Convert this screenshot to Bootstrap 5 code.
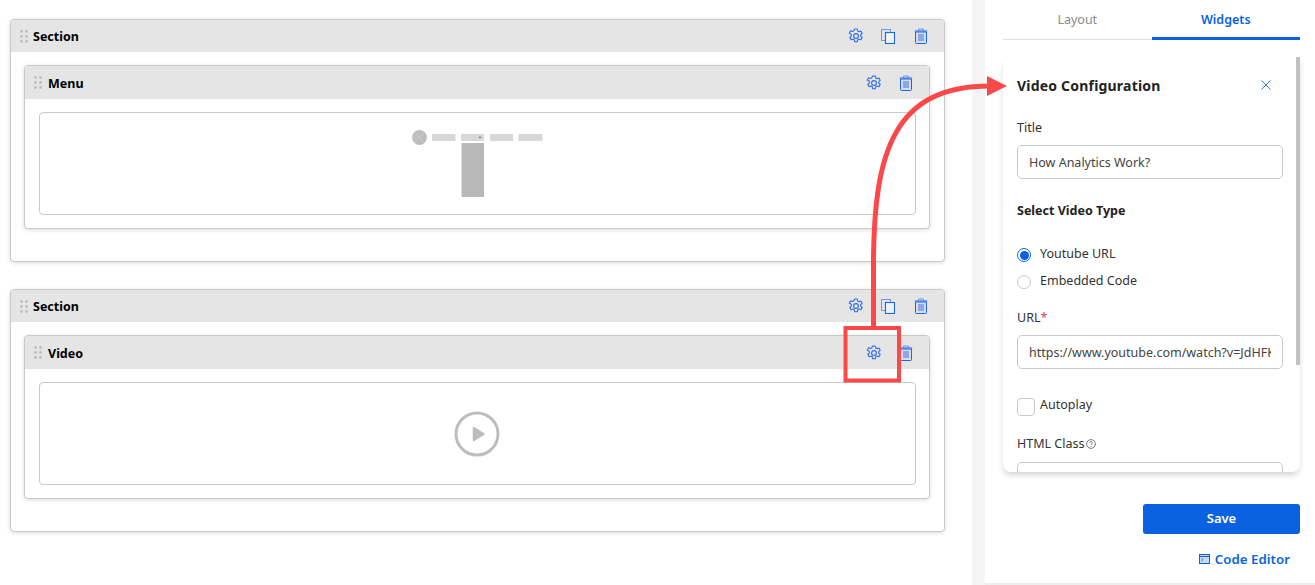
<!DOCTYPE html>
<html lang="en">
<head>
<meta charset="utf-8">
<title>Video Configuration</title>
<link href="https://cdn.jsdelivr.net/npm/bootstrap@5.3.0/dist/css/bootstrap.min.css" rel="stylesheet">
<style>
html,body{height:585px;overflow:hidden;background:#fff;}
body{font-family:"Noto Sans","Open Sans",sans-serif;font-size:13px;color:#333;position:relative;}
.page-wrap{height:585px;}
.canvas-area{width:972px;padding:19px 27px 0 10px;flex:none;}
.gutter-band{width:13px;background:#f5f5f5;flex:none;}
.side-area{flex:1;padding:0 15px 0 18px;min-width:0;border-bottom:2px solid #eee;}
.block-box{border:1px solid #c9c9c9;border-radius:4px;box-shadow:0 1px 4px rgba(0,0,0,.14);background:#fff;}
.section-box{height:243px;margin-bottom:27px;}
.block-head{background:#e5e5e5;border-radius:3px 3px 0 0;font-weight:700;color:#000;font-size:12.5px;}
.head-label{padding-top:3px;}
.section-box>.block-head{height:32px;padding:0 16px 0 9px;}
.widget-box{margin:13px 14px 0 13px;height:164px;}
.widget-box>.block-head{height:33px;padding:0 16px 0 9px;}
.drag-dots{width:8px;height:13px;margin-right:5px;flex:none;}
.widget-box .drag-dots{margin-right:6px;}
.head-actions{gap:17.5px;}
.copy-glyph{margin-right:1.5px;}
.placeholder-box{height:103px;margin:13px 13px 0 14px;border:1px solid #c9c9c9;border-radius:4px;background:#fff;}
.menu-art{margin:8px 2px 0 0;}
.play-art{margin-right:2px;}
.tab-row{height:40px;border-bottom:1px solid #e0e0e0;}
.tab-item{flex:1;font-size:12.5px;color:#8a8a8a;text-align:center;padding-top:11px;height:40px;}
.tab-item.is-on{color:#0b62e0;font-weight:600;border-bottom:3px solid #0b62e0;}
.config-panel{margin-top:17px;height:415px;border-radius:8px 0 8px 8px;box-shadow:0 4px 6px -1px rgba(0,0,0,.18);position:relative;overflow:hidden;padding:0 17px 0 14px;background:#fff;}
.scroll-thumb{position:absolute;right:0;top:0;width:4px;height:308px;background:#c1c1c1;}
.config-title{font-size:14px;font-weight:700;color:#222;letter-spacing:.2px;padding-top:18px;height:62px;}
.close-x{margin-right:12px;margin-top:5px;}
.field-label{font-size:12.5px;color:#333;margin-bottom:8px;line-height:18px;}
.url-label{margin-top:14px;}
.class-label{margin-top:15px;margin-bottom:9px;gap:2px;}
.field-input{height:34px;border:1px solid #c9c9c9;border-radius:5px;font-size:12.5px;padding:0 11px;color:#444;font-family:inherit;box-shadow:none;}
.field-input:focus{border-color:#c9c9c9;box-shadow:none;}
.sub-title{font-size:12.5px;font-weight:700;color:#222;margin-top:23px;margin-bottom:21px;line-height:18px;}
.radio-row{height:27px;gap:9px;font-size:12.5px;color:#333;}
.check-row{margin-top:24px;gap:5px;}
.check-row>span:last-child{margin-top:-3px;}
.radio-dot{width:14px;height:14px;border:1.5px solid #c9c9c9;border-radius:50%;flex:none;background:#fff;}
.radio-dot:not(.is-on){border-width:1px;}
.radio-dot.is-on{border-color:#0b62e0;padding:1.5px;background:#0b62e0 content-box;}
.check-sq{width:18px;height:18px;border:1px solid #c9c9c9;border-radius:4px;flex:none;}
.req-mark{color:#e8384f;}
.save-btn{width:157px;height:30px;background:#0b62e0;border:0;border-radius:3px;color:#fff;font-size:13px;font-weight:600;padding:0;margin-top:32px;}
.save-btn:hover{background:#0b62e0;color:#fff;}
.editor-link{font-size:13.3px;font-weight:600;color:#0b62e0;gap:5px;margin-top:16px;padding-right:10px;line-height:18px;}
.overlay-art{position:absolute;left:0;top:0;pointer-events:none;}
.sym-store{position:absolute;width:0;height:0;}
</style>
</head>
<body>
<svg class="sym-store" aria-hidden="true">
  <symbol id="i-drag" viewBox="0 0 8 13"><g fill="#bdbdbd"><circle cx="1.500" cy="1.500" r="1.400"/><circle cx="6.500" cy="1.500" r="1.400"/><circle cx="1.500" cy="6.500" r="1.400"/><circle cx="6.500" cy="6.500" r="1.400"/><circle cx="1.500" cy="11.500" r="1.400"/><circle cx="6.500" cy="11.500" r="1.400"/></g></symbol>
  <symbol id="i-gear" viewBox="0 0 16 16"><g fill="none" stroke="#2f6be8" stroke-width="1.100"><path d="M6.700 1h2.600l.4 2 1.300.7 1.900-.7 1.300 2.300-1.500 1.300v1.600l1.500 1.300-1.300 2.300-1.900-.7-1.300.7-.4 2H6.700l-.4-2-1.300-.7-1.900.7-1.300-2.300 1.500-1.300V6.300L1.300 5l1.300-2.300 1.900.7 1.300-.7z" stroke-linejoin="round"/><circle cx="8" cy="8" r="2.400"/></g></symbol>
  <symbol id="i-copy" viewBox="0 0 14 15"><g fill="none"><rect x=".5" y=".5" width="9" height="11" fill="#dfe3f5" stroke="#7a93e6"/><rect x="4.500" y="3.500" width="9" height="11" fill="#f1f3fb" stroke="#1668e8" stroke-width="1.100"/></g></symbol>
  <symbol id="i-trash" viewBox="0 0 14 16"><g fill="none"><path d="M1.500 4h11v10.500a1 1 0 0 1-1 1h-9a1 1 0 0 1-1-1z" fill="#d5ddf3" stroke="#1668e8"/><path d="M.8 3h12.400" stroke="#1668e8"/><path d="M4.500 3V1h5v2" stroke="#6f8fe8"/><path d="M5 6v7M7 6v7M9 6v7" stroke="#4f6fd0"/></g></symbol>
</svg>
<div class="page-wrap d-flex">
  <div class="canvas-area">
    <div class="block-box section-box">
      <div class="block-head d-flex align-items-center">
        <svg class="drag-dots"><use href="#i-drag"/></svg>
        <span class="head-label">Section</span>
        <div class="head-actions d-flex align-items-center ms-auto">
          <svg width="16" height="16"><use href="#i-gear"/></svg>
          <svg class="copy-glyph" width="14" height="15"><use href="#i-copy"/></svg>
          <svg width="14" height="16"><use href="#i-trash"/></svg>
        </div>
      </div>
      <div class="block-box widget-box">
        <div class="block-head d-flex align-items-center">
          <svg class="drag-dots"><use href="#i-drag"/></svg>
          <span class="head-label">Menu</span>
          <div class="head-actions d-flex align-items-center ms-auto">
            <svg width="16" height="16"><use href="#i-gear"/></svg>
            <svg width="14" height="16"><use href="#i-trash"/></svg>
          </div>
        </div>
        <div class="placeholder-box d-flex justify-content-center">
          <svg class="menu-art" width="132" height="80" viewBox="0 0 132 80"><circle cx="8.500" cy="16.500" r="7.400" fill="#bdbdbd"/><path d="M3.500 11.500l10 10M13.500 11.500l-10 10" stroke="#d5d5d5" stroke-width=".6"/><g fill="#d8d8d8"><rect x="21" y="13" width="23.500" height="7"/><rect x="50" y="13" width="23" height="7"/><rect x="79" y="13" width="23" height="7"/><rect x="107.500" y="13" width="24" height="7"/></g><path d="M67.500 17l1.500-2 1.500 2z" fill="#777"/><rect x="50.500" y="22" width="22.500" height="54" fill="#b9b9b9"/></svg>
        </div>
      </div>
    </div>
    <div class="block-box section-box">
      <div class="block-head d-flex align-items-center">
        <svg class="drag-dots"><use href="#i-drag"/></svg>
        <span class="head-label">Section</span>
        <div class="head-actions d-flex align-items-center ms-auto">
          <svg width="16" height="16"><use href="#i-gear"/></svg>
          <svg class="copy-glyph" width="14" height="15"><use href="#i-copy"/></svg>
          <svg width="14" height="16"><use href="#i-trash"/></svg>
        </div>
      </div>
      <div class="block-box widget-box">
        <div class="block-head d-flex align-items-center">
          <svg class="drag-dots"><use href="#i-drag"/></svg>
          <span class="head-label">Video</span>
          <div class="head-actions d-flex align-items-center ms-auto">
            <svg width="16" height="16"><use href="#i-gear"/></svg>
            <svg width="14" height="16"><use href="#i-trash"/></svg>
          </div>
        </div>
        <div class="placeholder-box d-flex justify-content-center align-items-center">
          <svg class="play-art" width="46" height="46" viewBox="0 0 46 46"><circle cx="23" cy="23" r="21" fill="none" stroke="#bdbdbd" stroke-width="3"/><path d="M19.500 16.500v13l10.500-6.500z" fill="#bdbdbd" stroke="#bdbdbd" stroke-width="1.500" stroke-linejoin="round"/></svg>
        </div>
      </div>
    </div>
  </div>
  <div class="gutter-band"></div>
  <div class="side-area d-flex flex-column">
    <div class="tab-row d-flex">
      <div class="tab-item">Layout</div>
      <div class="tab-item is-on">Widgets</div>
    </div>
    <div class="config-panel">
      <div class="scroll-thumb"></div>
      <div class="config-title d-flex justify-content-between">
        <span>Video Configuration</span>
        <svg class="close-x" width="10" height="10" viewBox="0 0 10 10" fill="none" stroke="#2f7be8" stroke-width="1"><path d="M.5.5l9 9M9.500.5l-9 9"/></svg>
      </div>
      <div class="field-label">Title</div>
      <input class="form-control field-input" value="How Analytics Work?" aria-label="Title">
      <div class="sub-title">Select Video Type</div>
      <div class="radio-row d-flex align-items-center"><span class="radio-dot is-on"></span><span>Youtube URL</span></div>
      <div class="radio-row d-flex align-items-center"><span class="radio-dot"></span><span>Embedded Code</span></div>
      <div class="field-label url-label">URL<span class="req-mark">*</span></div>
      <input class="form-control field-input" value="https://www.youtube.com/watch?v=JdHFKwGzoeI" aria-label="URL">
      <div class="radio-row check-row d-flex align-items-center"><span class="check-sq"></span><span>Autoplay</span></div>
      <div class="field-label class-label d-flex align-items-center">HTML Class<svg width="10" height="10" viewBox="0 0 10 10" fill="none" stroke="#555" stroke-width=".8"><circle cx="5" cy="5" r="4.400"/><path d="M3.600 4c0-2 2.800-1.800 2.800-.2C6.400 5 5 4.800 5 6"/><path d="M5 7v.8"/></svg></div>
      <input class="form-control field-input" aria-label="HTML Class">
    </div>
    <div class="d-flex justify-content-end"><button class="btn save-btn" type="button">Save</button></div>
    <div class="editor-link d-flex align-items-center justify-content-end">
      <svg width="11" height="10" viewBox="0 0 11 10"><rect x=".5" y=".5" width="10" height="9" fill="#c8d9f5" stroke="#0b62e0"/><path d="M.5 2.500h10" stroke="#0b62e0"/><path d="M2.500 4.500l1.500 1.200-1.500 1.300" fill="none" stroke="#0b62e0" stroke-width=".8"/></svg>
      <span>Code Editor</span>
    </div>
  </div>
</div>
<svg class="overlay-art" width="1315" height="585" viewBox="0 0 1315 585">
  <path d="M873.500 327V265C873.500 150 895 86 990 86" fill="none" stroke="#fb4848" stroke-width="5"/>
  <path d="M987 76l20 10-20 10z" fill="#fb4848"/>
  <rect x="845.500" y="328" width="53.500" height="52.500" fill="none" stroke="#fb4848" stroke-width="4"/>
</svg>
</body>
</html>
